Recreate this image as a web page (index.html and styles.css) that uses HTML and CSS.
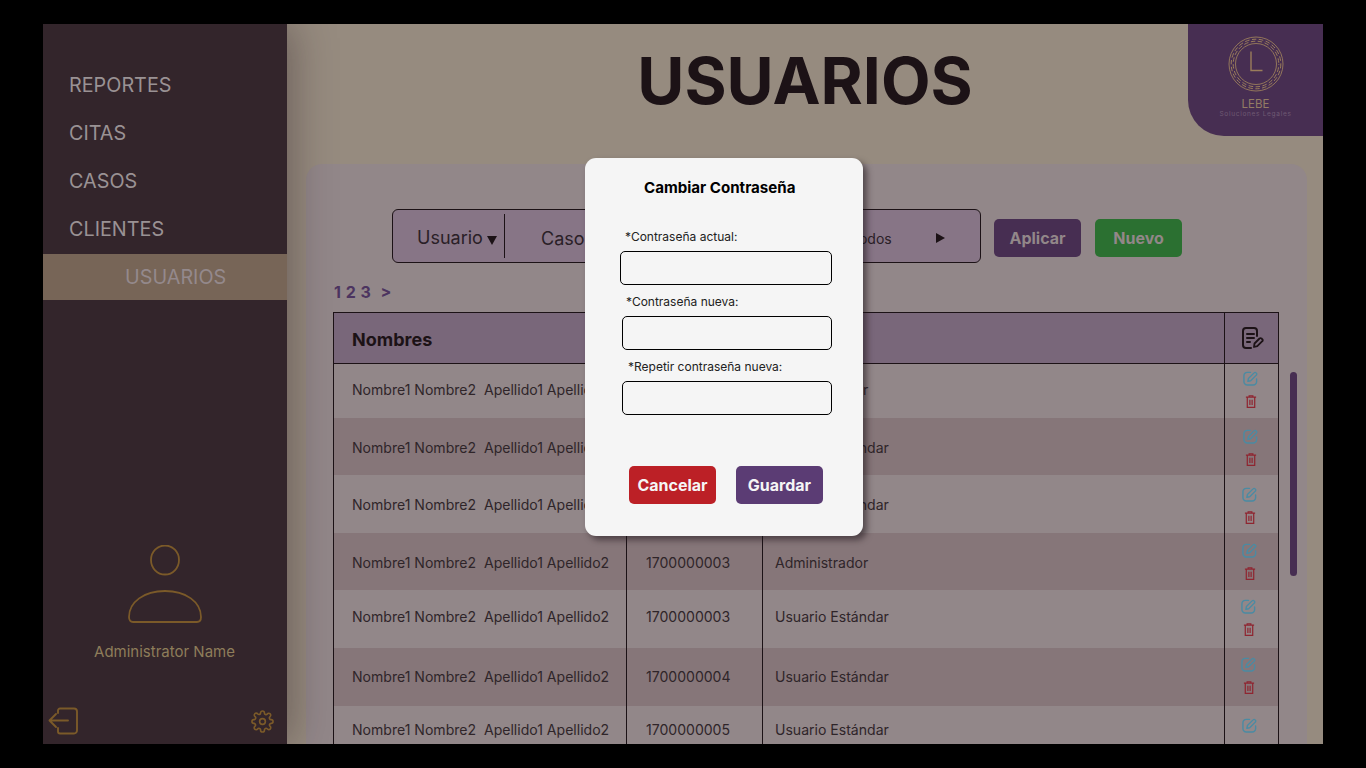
FILE: index.html
```html
<!DOCTYPE html>
<html lang="es">
<head>
<meta charset="utf-8">
<title>Usuarios</title>
<link rel="stylesheet" href="styles.css">
</head>
<body>
<svg class="defs" width="0" height="0" aria-hidden="true">
  <symbol id="ed" viewBox="0 0 16 16">
    <path d="M8 1.500H4.500A3.500 3.500 0 0 0 1 5v6.500A3.500 3.500 0 0 0 4.500 15h6.500a3.500 3.500 0 0 0 3.500-3.500V8.500" fill="none" stroke="currentColor" stroke-width="1.500" stroke-linecap="round"/>
    <path d="M5.200 11l.6-3 6-6a1.500 1.500 0 0 1 2.200 0l.2.200a1.500 1.500 0 0 1 0 2.200l-6 6z" fill="none" stroke="currentColor" stroke-width="1.500" stroke-linejoin="round"/>
  </symbol>
  <symbol id="tr" viewBox="0 0 12 14">
    <path d="M.5 2.300h11M4 2.200V.8h4v1.400M2 2.300v11h8v-11M4.800 5v5.800M7.200 5v5.800" fill="none" stroke="currentColor" stroke-width="1.300"/>
  </symbol>
</svg>
<div class="app">
  <aside class="side">
    <nav class="nav">
      <a class="item">REPORTES</a>
      <a class="item">CITAS</a>
      <a class="item">CASOS</a>
      <a class="item clients">CLIENTES</a>
      <a class="item active">USUARIOS</a>
    </nav>
    <div class="profile">
      <svg class="avatar" viewBox="0 0 76 80" width="76" height="80">
        <ellipse cx="38" cy="15" rx="14" ry="14.500" fill="none" stroke="#7b5a29" stroke-width="1.800"/>
        <path d="M2 72c0-15 15-26 36-26s36 11 36 26c0 3-1.500 5-4 5H6c-2.500 0-4-2-4-5z" fill="none" stroke="#7b5a29" stroke-width="1.800"/>
      </svg>
      <div class="admin">Administrator Name</div>
    </div>
    <div class="tools">
      <svg viewBox="0 0 30 28" width="30" height="28">
        <path d="M1.500 13.500H20M8 7l-6.500 6.500L8 20M10 6V3.500a2 2 0 0 1 2-2h14a3 3 0 0 1 3 3v19a3 3 0 0 1-3 3H12a2 2 0 0 1-2-2V21" fill="none" stroke="#7b5a29" stroke-width="1.900" stroke-linecap="round" stroke-linejoin="round"/>
      </svg>
      <svg viewBox="0 0 24 24" width="23" height="23" class="gear">
        <circle cx="12" cy="12" r="3" fill="none" stroke="#7b5a29" stroke-width="1.700"/>
        <path d="M19.400 15a1.700 1.700 0 0 0 .3 1.800l.1.100a2 2 0 1 1-2.800 2.800l-.1-.1a1.700 1.700 0 0 0-2.900 1.200v.2a2 2 0 1 1-4 0v-.1A1.700 1.700 0 0 0 7 19.700l-.1.100a2 2 0 1 1-2.800-2.800l.1-.1a1.700 1.700 0 0 0-1.200-2.900H3a2 2 0 1 1 0-4h.1A1.700 1.700 0 0 0 4.300 7l-.1-.1A2 2 0 1 1 7 4.100l.1.100a1.700 1.700 0 0 0 2.900-1.200V3a2 2 0 1 1 4 0v.1a1.700 1.700 0 0 0 2.900 1.200l.1-.1a2 2 0 1 1 2.800 2.800l-.1.1a1.700 1.700 0 0 0 1.200 2.900h.1a2 2 0 1 1 0 4h-.1a1.700 1.700 0 0 0-1.500 1z" fill="none" stroke="#7b5a29" stroke-width="1.700"/>
      </svg>
    </div>
  </aside>
  <main class="main">
    <header class="head">
      <h1 class="title">USUARIOS</h1>
      <div class="logo">
        <svg viewBox="0 0 56 56" width="56" height="56">
          <circle cx="28" cy="28" r="27" fill="none" stroke="#9a7d5b" stroke-width=".9"/>
          <circle cx="28" cy="28" r="24.800" fill="none" stroke="#9a7d5b" stroke-width="1" stroke-dasharray="4.500 2.500"/>
          <circle cx="28" cy="28" r="22.800" fill="none" stroke="#9a7d5b" stroke-width="1" stroke-dasharray="4.500 2.500" stroke-dashoffset="3.500"/>
          <circle cx="28" cy="28" r="20.500" fill="none" stroke="#9a7d5b" stroke-width=".9"/>
          <path d="M23 15.500v19h11.500" fill="none" stroke="#9a7d5b" stroke-width="1.400"/>
        </svg>
        <div class="lebe">LEBE</div>
        <div class="legal">Soluciones Legales</div>
      </div>
    </header>
    <section class="panel">
      <div class="filters">
        <div class="filter">
          <span class="f-user">Usuario <i class="down"></i></span>
          <span class="f-case">Caso</span>
          <span class="f-all">Todos</span>
          <i class="right"></i>
        </div>
        <button class="btn apply">Aplicar</button>
        <button class="btn new">Nuevo</button>
      </div>
      <div class="pages">1 2 3 &nbsp;&gt;</div>
      <div class="tablewrap">
        <div class="row th">
          <div class="c1">Nombres</div>
          <div class="c2"></div>
          <div class="c3"></div>
          <div class="c4">
            <svg viewBox="0 0 24 24" width="24" height="24">
              <path d="M17 10V5a3 3 0 0 0-3-3H6a3 3 0 0 0-3 3v14a3 3 0 0 0 3 3h5M7 8h7M7 12h7M7 16h3" fill="none" stroke="#1c1216" stroke-width="2" stroke-linecap="round"/>
              <path d="M14 21l.5-3.500 5-5a1.300 1.300 0 0 1 2 0l.8.700a1.300 1.300 0 0 1 0 2l-5 5z" fill="none" stroke="#1c1216" stroke-width="1.800" stroke-linejoin="round"/>
            </svg>
          </div>
        </div>
        <div class="row r1">
          <div class="c1">Nombre1 Nombre2&nbsp; Apellido1 Apellido2</div><div class="c2">1700000000</div><div class="c3">Administrador</div>
          <div class="c4 ic"><svg class="e"><use href="#ed"/></svg><svg class="t"><use href="#tr"/></svg></div>
        </div>
        <div class="row r2 alt">
          <div class="c1">Nombre1 Nombre2&nbsp; Apellido1 Apellido2</div><div class="c2">1700000001</div><div class="c3">Usuario Estándar</div>
          <div class="c4 ic"><svg class="e"><use href="#ed"/></svg><svg class="t"><use href="#tr"/></svg></div>
        </div>
        <div class="row r3">
          <div class="c1">Nombre1 Nombre2&nbsp; Apellido1 Apellido2</div><div class="c2">1700000002</div><div class="c3">Usuario Estándar</div>
          <div class="c4 ic"><svg class="e"><use href="#ed"/></svg><svg class="t"><use href="#tr"/></svg></div>
        </div>
        <div class="row r4 alt">
          <div class="c1">Nombre1 Nombre2&nbsp; Apellido1 Apellido2</div><div class="c2">1700000003</div><div class="c3">Administrador</div>
          <div class="c4 ic"><svg class="e"><use href="#ed"/></svg><svg class="t"><use href="#tr"/></svg></div>
        </div>
        <div class="row r5">
          <div class="c1">Nombre1 Nombre2&nbsp; Apellido1 Apellido2</div><div class="c2">1700000003</div><div class="c3">Usuario Estándar</div>
          <div class="c4 ic"><svg class="e"><use href="#ed"/></svg><svg class="t"><use href="#tr"/></svg></div>
        </div>
        <div class="row r6 alt">
          <div class="c1">Nombre1 Nombre2&nbsp; Apellido1 Apellido2</div><div class="c2">1700000004</div><div class="c3">Usuario Estándar</div>
          <div class="c4 ic"><svg class="e"><use href="#ed"/></svg><svg class="t"><use href="#tr"/></svg></div>
        </div>
        <div class="row r7">
          <div class="c1">Nombre1 Nombre2&nbsp; Apellido1 Apellido2</div><div class="c2">1700000005</div><div class="c3">Usuario Estándar</div>
          <div class="c4 ic"><svg class="e"><use href="#ed"/></svg></div>
        </div>
      </div>
      <div class="thumb"></div>
    </section>
    <div class="modal">
      <h2 class="m-title">Cambiar Contraseña</h2>
      <label class="lab l1">*Contraseña actual:</label>
      <div class="inp i1"></div>
      <label class="lab l2">*Contraseña nueva:</label>
      <div class="inp i2"></div>
      <label class="lab l3">*Repetir contraseña nueva:</label>
      <div class="inp i3"></div>
      <div class="m-btns">
        <button class="btn cancel">Cancelar</button>
        <button class="btn save">Guardar</button>
      </div>
    </div>
  </main>
</div>
</body>
</html>
```
FILE: styles.css
```css
* { box-sizing: border-box; }
html, body { margin: 0; height: 100%; background: #000; overflow: hidden; }
body { font-family: Inter, "Liberation Sans", sans-serif; padding: 24px 43px; }
.defs { position: absolute; }
.app { display: flex; width: 1280px; height: 720px; overflow: hidden; background: #968b7f; position: relative; }
.side { width: 244px; flex: none; background: #33252b; display: flex; flex-direction: column; position: relative; z-index: 2; box-shadow: 4px 0 40px rgba(40,25,30,.4); }
.nav { display: flex; flex-direction: column; padding-top: 37px; }
.item { height: 48px; line-height: 48px; padding-left: 26px; font-size: 19.800px; color: #9a9294; }
.item.clients { height: 49px; }
.item.active { height: 46px; line-height: 46px; padding-left: 82px; background: #776557; color: #94898c; }
.profile { margin-top: 245px; display: flex; flex-direction: column; align-items: center; height: 130px; }
.avatar { display: block; }
.admin { margin: 17px 1px 0 0; font-size: 15px; color: #8e7d5a; }
.tools { display: flex; justify-content: space-between; align-items: center; padding: 0 13px 0 5px; margin-top: 32px; }
.main { flex: 1; position: relative; display: flex; flex-direction: column; background: #968b7f; }
.head { height: 140px; flex: none; position: relative; display: flex; justify-content: center; }
.title { margin: 21px 0 0 0; font-size: 64.400px; line-height: 72px; font-weight: 700; color: #1c1216; }
.logo { position: absolute; top: 0; right: 0; width: 135px; height: 112px; background: #472e52; border-bottom-left-radius: 36px; display: flex; flex-direction: column; align-items: center; padding-top: 12px; }
.lebe { font-size: 11.500px; line-height: 12px; margin-top: 6px; color: #937c64; }
.legal { font-size: 6.500px; line-height: 8px; letter-spacing: .7px; color: #6f5a72; }
.panel { position: relative; flex: 1; margin: 0 16px 0 19px; background: #928789; border-radius: 16px 16px 0 0; overflow: hidden; }
.filters { display: flex; align-items: center; padding: 45px 0 0 86px; }
.filter { width: 589px; height: 54px; border: 1px solid #1c1216; border-radius: 6px; background: #877586; display: flex; align-items: center; position: relative; color: #2a2027; }
.f-user { width: 112px; height: 44px; line-height: 48px; padding-left: 24px; font-size: 18px; border-right: 1px solid #1c1216; white-space: nowrap; }
.down { display: inline-block; border-left: 5.500px solid transparent; border-right: 5.500px solid transparent; border-top: 9px solid #1c1216; vertical-align: -1px; margin-left: -1px; }
.f-case { padding: 4px 0 0 36px; font-size: 18px; width: 346px; }
.f-all { padding-top: 4px; font-size: 14px; width: 85px; }
.right { margin-top: 4px; border-top: 5px solid transparent; border-bottom: 5px solid transparent; border-left: 9px solid #1c1216; }
.btn { border: 0; border-radius: 5px; font-family: inherit; font-weight: 700; font-size: 16px; width: 87px; height: 38px; padding: 0; }
.apply { margin: 4px 0 0 13px; background: #472e52; color: #928789; }
.new { margin: 4px 0 0 14px; background: #2b7031; color: #928789; }
.pages { margin: 20px 0 0 28px; height: 18px; line-height: 18px; font-size: 16px; font-weight: 700; color: #4c3460; word-spacing: 1px; }
.tablewrap { margin: 11px 0 0 27px; width: 946px; border-top: 1px solid #1c1216; border-left: 1px solid #1c1216; border-right: 1px solid #1c1216; font-size: 14.050px; color: #2f2529; }
.row { display: grid; grid-template-columns: 292px 136px 462px 1fr; background: #928789; }
.row.alt { background: #867679; }
.row > div { display: flex; align-items: center; }
.c1 { padding-left: 18px; white-space: nowrap; }
.c2 { padding-left: 19px; border-left: 1px solid #1c1216; }
.c3 { padding-left: 12px; border-left: 1px solid #1c1216; }
.c4 { border-left: 1px solid #1c1216; justify-content: center; }
.th { height: 51px; background: #79677a; border-bottom: 1px solid #1c1216; font-size: 18px; font-weight: 700; color: #1c1216; }
.th .c1 { padding-top: 2px; }
.r1 { height: 54px; }
.r2 { height: 57px; }
.r3 { height: 58px; }
.r4 { height: 57px; }
.r5 { height: 58px; }
.r6 { height: 58px; }
.r7 { height: 48px; }
.r1 > div:not(.ic) { padding-bottom: 4px; }
.r2 > div:not(.ic) { padding-top: 1px; }
.r4 > div:not(.ic) { padding-top: 1px; }
.r5 > div:not(.ic) { padding-bottom: 6px; }
.r6 > div:not(.ic) { padding-bottom: 2px; }
.r7 > div:not(.ic) { padding-bottom: 2px; }
.row .ic { flex-direction: column; gap: 9px; }
.r1 .ic { padding: 0 2px 3px 0; }
.r2 .ic { padding: 2px 2px 0 0; }
.r3 .ic { padding: 3px 4px 0 0; }
.r4 .ic { padding: 0 4px 0 0; }
.r5 .ic { padding: 0 6px 3px 0; }
.r6 .ic { padding: 0 6px 3px 0; }
.r7 .ic { padding: 0 4px 10px 0; }
.e { width: 15px; height: 15px; color: #4a8ba3; display: block; }
.t { width: 12px; height: 13px; color: #8f2530; display: block; }
.thumb { position: absolute; top: 208px; right: 10px; width: 7px; height: 204px; border-radius: 4px; background: #472e52; }
.modal { position: absolute; left: 298px; top: 134px; width: 278px; height: 378px; background: #f5f5f5; border-radius: 11px; box-shadow: 4px 4px 6px rgba(30,20,25,.55); z-index: 3; display: flex; flex-direction: column; color: #222; }
.m-title { margin: 22px 0 0 59px; font-size: 15.100px; line-height: 16px; font-weight: 700; color: #000; }
.lab { display: block; font-size: 12px; line-height: 14px; }
.l1 { margin: 34px 0 0 40px; }
.l2 { margin: 10px 0 0 41px; }
.l3 { margin: 10px 0 0 43px; }
.inp { height: 34px; width: 210px; margin: 7px 0 0 37px; border: 1px solid #000; border-radius: 5px; background: #f5f5f5; }
.i1 { width: 212px; margin-left: 35px; }
.m-btns { display: flex; gap: 20px; margin: 51px 0 0 44px; }
.cancel { background: #bc2026; color: #f5f5f5; }
.save { background: #5b3c74; color: #f5f5f5; }
```
